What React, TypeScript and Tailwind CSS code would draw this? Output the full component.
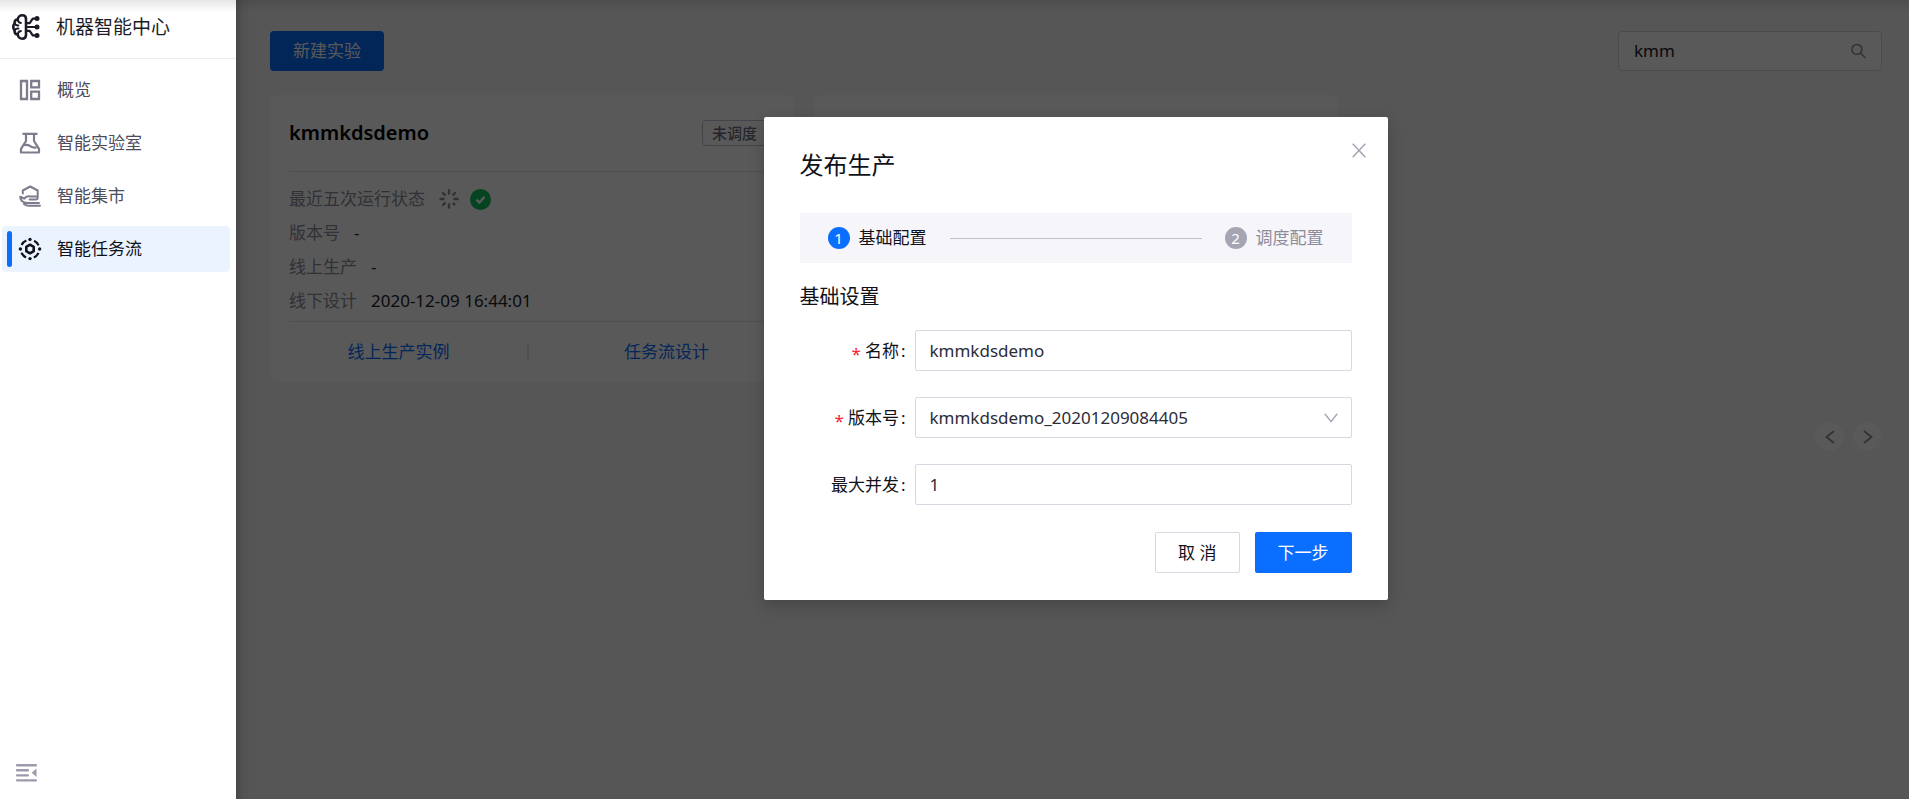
import React, { useState } from "react";

type NavItem = {
  label: string;
  icon: React.ReactNode;
  active?: boolean;
};

function LogoIcon() {
  return (
    <svg width="28" height="26" viewBox="0 0 28 26" fill="none" stroke="#1c1c28" strokeWidth="2.600" strokeLinecap="round" strokeLinejoin="round">
      <path d="M14 5c0-2.300-1.600-3.700-3.800-3.700S6 2.900 5.900 5.300C3.300 5.600 2.400 7 2.600 9.300 1.700 10.400 1.300 11.600 1.300 13s.4 2.600 1.300 3.700c-.2 2.300.7 3.700 3.300 4 .1 2.400 2.100 4 4.300 4s3.800-1.400 3.800-3.700z" />
      <path d="M5.900 5.800c.1 1.900 1.200 3 3 3.200M5.900 20.200c.1-1.900 1.200-3 3-3.200M2.600 9.600c1 1.400 2.200 2 3.800 1.800M2.600 16.400c1-1.400 2.200-2 3.800-1.800" strokeWidth="2" />
      <path d="M14.500 9.200h3.200l3-4.600H25M14.500 13H25M14.500 16.800h3.200l3 4.600H25" strokeWidth="2.200" />
      <g fill="#1c1c28" stroke="none">
        <circle cx="25" cy="4.500" r="2.500" />
        <circle cx="25" cy="13" r="2.500" />
        <circle cx="25" cy="21.500" r="2.500" />
      </g>
    </svg>
  );
}

function OverviewIcon() {
  return (
    <svg width="22" height="22" viewBox="0 0 22 22" fill="none" stroke="currentColor" strokeWidth="2.300">
      <path d="M2 2h6v18H2zM12.200 2H20v6.300h-7.800zM12.200 12.700H20V20h-7.800z" />
    </svg>
  );
}

function LabIcon() {
  return (
    <svg width="22" height="22" viewBox="0 0 22 22" fill="none" stroke="currentColor" strokeWidth="2.200" strokeLinejoin="round">
      <path d="M3.500 1.800h15M7 2v7L2 16.800v3.700h18v-3.700L15 9V2M5 13.200c2.500-.8 4.500-.3 6.200.9s4 1.700 6.300 1.300" />
    </svg>
  );
}

function MarketIcon() {
  return (
    <svg width="22" height="22" viewBox="0 0 22 22" fill="none" stroke="currentColor" strokeWidth="2" strokeLinecap="round" strokeLinejoin="round">
      <path d="M3.800 8.500V5.500L11.200 1.500l7.500 4v6" />
      <path d="M1.200 11.800c1.500 0 2.500 1.200 4 1.900 1.300-2 3.500-2.700 6-2.200h6c2 0 2 2.900 0 2.900h-6.500M1.200 11.800c.3 3.700 3.300 6.200 8 6.200H20M5 19c1.500 1.300 3 1.800 5 1.800h11" />
    </svg>
  );
}

function TaskFlowIcon() {
  return (
    <svg width="24" height="24" viewBox="0 0 24 24" fill="none" stroke="#11111a" strokeWidth="2.200">
      <circle cx="12" cy="12" r="9.300" strokeDasharray="6.600 8" strokeDashoffset="-4" />
      <path d="M12 7.700l3.700 2.100v4.400L12 16.300l-3.700-2.100V9.800z" strokeWidth="2.600" strokeLinejoin="round" />
      <g fill="#11111a" stroke="none">
        <circle cx="12" cy="2.400" r="1.700" />
        <circle cx="21.600" cy="12" r="1.700" />
        <circle cx="12" cy="21.600" r="1.700" />
        <circle cx="2.400" cy="12" r="1.700" />
      </g>
    </svg>
  );
}

function CollapseIcon() {
  return (
    <svg width="21" height="18" viewBox="0 0 21 18" fill="#9b9bab">
      <rect width="21" height="2.400" rx="1" />
      <rect y="5" width="13" height="2.400" rx="1" />
      <rect y="10.200" width="13" height="2.400" rx="1" />
      <rect y="15.200" width="21" height="2.400" rx="1" />
      <path d="M20.500 4.500v8.500L15.800 8.800z" />
    </svg>
  );
}

function SpinIcon() {
  return (
    <svg width="20" height="20" viewBox="0 0 20 20" stroke="#8c8c9b" strokeWidth="2.400" strokeLinecap="round">
      <path d="M10 1.500v3M10 15.500v3M1.500 10h3M15.500 10h3M4 4l1.800 1.800M14.600 14.600l.8.800M4 16l1.800-1.800M14.200 5.800L16 4" />
    </svg>
  );
}

function SuccessIcon() {
  return (
    <svg width="21" height="21" viewBox="0 0 21 21" fill="none">
      <circle cx="10.500" cy="10.500" r="10.500" fill="#0fbf60" />
      <path d="M6.300 10.700l3 2.800 5.200-5.600" stroke="#fff" strokeWidth="2.400" />
    </svg>
  );
}

function SearchIcon() {
  return (
    <svg width="16" height="16" viewBox="0 0 16 16" fill="none" stroke="#8c8c9b" strokeWidth="1.600">
      <circle cx="6.300" cy="6.300" r="5.300" />
      <path d="M10.200 10.200l5.200 5.200" />
    </svg>
  );
}

const NAV: NavItem[] = [
  { label: "概览", icon: <OverviewIcon /> },
  { label: "智能实验室", icon: <LabIcon /> },
  { label: "智能集市", icon: <MarketIcon /> },
  { label: "智能任务流", icon: <TaskFlowIcon />, active: true },
];

const DETAILS = [
  { label: "版本号", value: "-" },
  { label: "线上生产", value: "-" },
  { label: "线下设计", value: "2020-12-09 16:44:01" },
];

function Sidebar() {
  return (
    <aside className="flex w-[236px] shrink-0 flex-col bg-white">
      <div className="flex h-[59px] items-center gap-4 border-b border-[#ebebf0] pb-1 pl-3">
        <LogoIcon />
        <h1 className="text-[19px] text-[#1c1c28]">机器智能中心</h1>
      </div>
      <nav className="flex flex-col gap-[7px] pt-2 pr-1.5 pl-0.5">
        {NAV.map((item) => (
          <a
            key={item.label}
            href="#"
            className={`flex h-[46px] items-center rounded-sm pl-[5px] ${
              item.active ? "bg-[#ebf3ff] text-[#11111a]" : "text-[#4c4c5c]"
            }`}
          >
            <span className={`h-9 w-[5px] rounded-sm ${item.active ? "bg-[#0a6eff]" : ""}`} />
            <span className="flex w-9 justify-center text-[#7c7c8c]">{item.icon}</span>
            <span className="pl-[9px]">{item.label}</span>
          </a>
        ))}
      </nav>
      <button aria-label="收起菜单" className="mt-auto mb-[17px] ml-4 self-start">
        <CollapseIcon />
      </button>
    </aside>
  );
}

function ExperimentCard() {
  return (
    <article className="rounded-lg bg-white">
      <div className="mx-[19px] flex h-[77px] items-center justify-between border-b border-[#e1e1e8]">
        <h2 className="text-xl font-semibold text-black">kmmkdsdemo</h2>
        <span className="mr-2 rounded border border-[#c4c4cf] px-[9px] text-[15px] leading-6 font-medium text-[#6c6c7c]">
          未调度
        </span>
      </div>
      <dl className="mx-[19px] border-b border-[#e1e1e8] pt-2.5 pb-[3px] text-[#8c8c9b]">
        <div className="flex h-[34px] items-center gap-[14px]">
          <dt>最近五次运行状态</dt>
          <dd className="flex items-center gap-[11px]">
            <SpinIcon />
            <SuccessIcon />
          </dd>
        </div>
        {DETAILS.map((row) => (
          <div key={row.label} className="flex h-[34px] items-center gap-[14px]">
            <dt>{row.label}</dt>
            <dd className="text-[#1c1c28]">{row.value}</dd>
          </div>
        ))}
      </dl>
      <div className="grid h-[60px] grid-cols-[257px_2px_1fr] items-center text-center text-[#0a6eff]">
        <a href="#">线上生产实例</a>
        <span className="h-[18px] bg-[#e1e1ee]" />
        <a href="#" className="pl-2.5">任务流设计</a>
      </div>
    </article>
  );
}

function Workspace() {
  const [keyword, setKeyword] = useState("kmm");

  return (
    <div className="pt-[31px] pr-[27px] pl-[34px]">
      <div className="flex items-center justify-between">
        <button className="h-10 rounded-sm bg-[#0a6eff] px-[23px] text-white">新建实验</button>
        <div className="flex h-10 w-[264px] items-center rounded-sm border border-[#d8d8e2] bg-white px-[15px]">
          <input
            aria-label="搜索"
            value={keyword}
            onChange={(e) => setKeyword(e.target.value)}
            className="w-full min-w-0 text-[#1c1c28] outline-none"
          />
          <SearchIcon />
        </div>
      </div>
      <div className="mt-6 grid grid-cols-3 gap-5">
        <ExperimentCard />
        <article className="rounded-lg bg-white" />
      </div>
      <div className="mt-10 flex justify-end gap-[9px] text-[#8c8c9b]">
        <button aria-label="上一页" className="flex size-[29px] items-center justify-center rounded-full bg-white">
          <svg width="10" height="14" viewBox="0 0 10 14" fill="none" stroke="currentColor" strokeWidth="1.800">
            <path d="M9 1L1.500 7 9 13" />
          </svg>
        </button>
        <button aria-label="下一页" className="flex size-[29px] items-center justify-center rounded-full bg-white">
          <svg width="10" height="14" viewBox="0 0 10 14" fill="none" stroke="currentColor" strokeWidth="1.800">
            <path d="M1 1l7.500 6L1 13" />
          </svg>
        </button>
      </div>
    </div>
  );
}

function FieldLabel({ id, text, required }: { id: string; text: string; required?: boolean }) {
  return (
    <label htmlFor={id} className="flex w-[115px] shrink-0 items-center justify-end pr-[9px] text-[#11111a]">
      {required && <span className="mt-1.5 mr-1 text-[#f5222d]">*</span>}
      {text}
      <span className="ml-0.5">:</span>
    </label>
  );
}

function Step({ index, label, current }: { index: number; label: string; current?: boolean }) {
  return (
    <li className={`flex items-center gap-[9px] ${current ? "text-[#11111a]" : "text-[#8c8c9b]"}`}>
      <span
        className={`flex size-[22px] items-center justify-center rounded-full text-[15px] text-white ${
          current ? "bg-[#0a6eff]" : "bg-[#a5a5b4]"
        }`}
      >
        {index}
      </span>
      {label}
    </li>
  );
}

function PublishDialog() {
  const [name, setName] = useState("kmmkdsdemo");
  const [concurrency, setConcurrency] = useState("1");

  return (
    <div
      role="dialog"
      aria-labelledby="publish-title"
      className="relative w-[624px] rounded-xs bg-white px-9 pt-[30px] pb-[27px] shadow-[0_5px_15px_rgba(0,0,0,0.2)]"
    >
      <button aria-label="关闭" className="absolute top-[26px] right-[22px] text-[#a5a5b4]">
        <svg width="14" height="15" viewBox="0 0 14 15" fill="none" stroke="currentColor" strokeWidth="1.500">
          <path d="M.7.700l12.600 13.600M13.300.700L.7 14.300" />
        </svg>
      </button>
      <h2 id="publish-title" className="mb-[30px] text-2xl leading-9 text-[#11111a]">
        发布生产
      </h2>
      <ol className="flex h-[50px] items-center bg-[#f5f5fa] px-7">
        <Step index={1} label="基础配置" current />
        <li aria-hidden="true" className="mx-[23px] h-px flex-1 bg-[#c0c0cc]" />
        <Step index={2} label="调度配置" />
      </ol>
      <h3 className="mt-5 mb-[19px] text-xl leading-7 text-[#11111a]">基础设置</h3>
      <form onSubmit={(e) => e.preventDefault()}>
        <div className="flex flex-col gap-[26px] text-[#2c2c38]">
          <div className="flex">
            <FieldLabel id="name" text="名称" required />
            <input
              id="name"
              value={name}
              onChange={(e) => setName(e.target.value)}
              className="h-[41px] min-w-0 flex-1 rounded-xs border border-[#d8d8e2] px-[14px]"
            />
          </div>
          <div className="flex">
            <FieldLabel id="version" text="版本号" required />
            <div className="relative flex-1">
              <select id="version" className="h-[41px] w-full appearance-none rounded-xs border border-[#d8d8e2] bg-white px-[14px]">
                <option>kmmkdsdemo_20201209084405</option>
              </select>
              <svg className="pointer-events-none absolute top-4 right-[14px]" width="14" height="10" viewBox="0 0 14 10" fill="none" stroke="#a5a5b4" strokeWidth="1.400">
                <path d="M.8.800L7 8.600 13.200.800" />
              </svg>
            </div>
          </div>
          <div className="flex">
            <FieldLabel id="concurrency" text="最大并发" />
            <input
              id="concurrency"
              value={concurrency}
              onChange={(e) => setConcurrency(e.target.value)}
              className="h-[41px] min-w-0 flex-1 rounded-xs border border-[#d8d8e2] px-[14px]"
            />
          </div>
        </div>
        <div className="mt-[27px] flex justify-end gap-[15px]">
          <button type="button" className="h-[41px] rounded-xs border border-[#d8d8e2] px-[22px] text-[#11111a]">
            取 消
          </button>
          <button type="submit" className="h-[41px] rounded-xs bg-[#0a6eff] px-[23px] text-white">
            下一步
          </button>
        </div>
      </form>
    </div>
  );
}

export default function App() {
  return (
    <div className="relative flex min-h-screen bg-[#f5f5f5] font-['Noto_Sans','Noto_Sans_CJK_SC',sans-serif] text-[17px] leading-6">
      <Sidebar />
      <main className="relative flex-1">
        <Workspace />
        <div className="absolute inset-0 flex items-start justify-center bg-black/65 pt-[117px] pl-1.5 shadow-[inset_12px_0_12px_-10px_rgba(0,0,0,0.25)]">
          <PublishDialog />
        </div>
      </main>
      <div className="pointer-events-none absolute inset-x-0 top-0 h-3 bg-linear-to-b from-black/10 to-transparent" />
    </div>
  );
}
